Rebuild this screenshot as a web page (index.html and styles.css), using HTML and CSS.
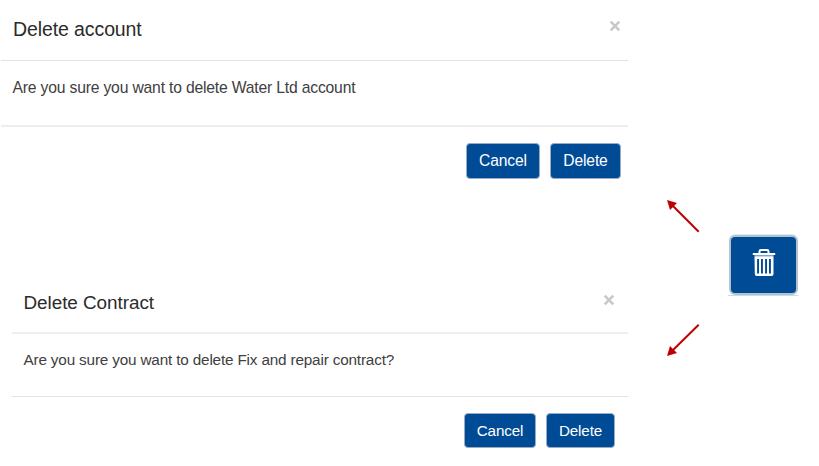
FILE: index.html
```html
<!DOCTYPE html>
<html lang="en">
<head>
<meta charset="utf-8">
<title>Delete confirmation</title>
<link rel="stylesheet" href="styles.css">
</head>
<body>
<main class="board">
  <div class="dialogs">
    <section class="dialog account">
      <header class="head">
        <h2 class="title">Delete account</h2>
        <button class="close" aria-label="Close"><svg width="12" height="12" viewBox="0 0 12 12"><path d="M1.7 1.7 10.3 10.3M10.3 1.7 1.7 10.3"/></svg></button>
      </header>
      <p class="message">Are you sure you want to delete Water Ltd account</p>
      <footer class="actions">
        <button class="btn cancel">Cancel</button>
        <button class="btn delete">Delete</button>
      </footer>
    </section>
    <section class="dialog contract">
      <header class="head">
        <h2 class="title">Delete Contract</h2>
        <button class="close" aria-label="Close"><svg width="12" height="12" viewBox="0 0 12 12"><path d="M1.7 1.7 10.3 10.3M10.3 1.7 1.7 10.3"/></svg></button>
      </header>
      <p class="message">Are you sure you want to delete Fix and repair contract?</p>
      <footer class="actions">
        <button class="btn cancel">Cancel</button>
        <button class="btn delete">Delete</button>
      </footer>
    </section>
  </div>
  <div class="arrows">
    <svg class="arrow" width="34" height="34" viewBox="0 0 34 34"><path class="shaft" d="M5 5 32.7 32.7"/><path class="tip" d="M1 1 11 4 4 11Z"/></svg>
    <svg class="arrow" width="34" height="34" viewBox="0 0 34 34"><path class="shaft" d="M5 29 32.700 1.700"/><path class="tip" d="M1 33 4 23 11 30Z"/></svg>
  </div>
  <div class="trigger">
    <button class="trash" aria-label="Delete">
      <svg width="24" height="30" viewBox="0 0 24 30">
        <path class="line" d="M7.5 5V3.4Q7.5 2 9 2H15Q16.5 2 16.5 3.4V5"/>
        <path class="lid" d="M.8 5H23.2V7H.8Z"/>
        <path class="rim" d="M2.5 7H21.5V8.300H2.500Z"/>
        <path class="can" fill-rule="evenodd" d="M2.500 8.300H21.500V26Q21.500 28 19.500 28H4.700Q2.800 28 2.800 26ZM5.100 11V25.500H7V11ZM9 11V25.500H10.900V11ZM13.100 11V25.500H15V11ZM17 11V25.500H18.900V11Z"/>
      </svg>
    </button>
  </div>
</main>
</body>
</html>
```
FILE: styles.css
```css
* { box-sizing: border-box; }
body {
  margin: 0;
  background: #fff;
  color: #333;
  font-family: "Liberation Sans", Arial, sans-serif;
}
.board {
  display: flex;
  align-items: flex-start;
  width: 819px;
  height: 466px;
  overflow: hidden;
}
.dialogs { width: 628px; }
.dialog { display: flex; flex-direction: column; }
.account { height: 274px; padding-left: 1px; }
.contract { padding-left: 12px; }
.head {
  display: flex;
  justify-content: space-between;
  align-items: flex-start;
  height: 61px;
  padding: 17px 7px 0 12px;
  border-bottom: 1px solid #e2e2e2;
}
.contract .head {
  height: 60px;
  padding: 17px 13px 0 11.500px;
  border-bottom: 2px solid #eee;
}
.title {
  margin: 0;
  font-size: 19.5px;
  letter-spacing: -0.1px;
  line-height: 24px;
  font-weight: 400;
  color: #2b2b2b;
}
.contract .title { font-size: 18.9px; letter-spacing: -0.050px; }
.close {
  display: flex;
  margin: 3px 0 0;
  padding: 0;
  border: 0;
  background: none;
}
.close path { fill: none; stroke: #c9c9c9; stroke-width: 2.6; }
.message {
  height: 66px;
  margin: 0;
  padding: 17px 12px 0 11.5px;
  border-bottom: 2px solid #eee;
  font-size: 15.700px;
  letter-spacing: -0.180px;
  line-height: 20px;
  color: #404040;
}
.contract .message {
  height: 63px;
  padding-top: 16px;
  border-bottom: 1px solid #e4e4e4;
  font-size: 15.300px;
  letter-spacing: -0.170px;
}
.actions {
  display: flex;
  justify-content: flex-end;
  gap: 10px;
  padding: 16px 7px 0 0;
}
.contract .actions { padding: 16px 13px 0 0; }
.btn {
  width: 75px;
  height: 36px;
  padding: 0;
  border: 1px solid #9aabc2;
  border-radius: 4px;
  background: #004b96;
  color: #fff;
  font: 15.600px/20px "Liberation Sans", Arial, sans-serif;
  letter-spacing: -0.120px;
}
.account .cancel { width: 74px; }
.account .delete { width: 71px; }
.contract .btn { height: 35px; font-size: 15.200px; }
.contract .cancel { width: 72px; }
.contract .delete { width: 69px; }
.arrows {
  display: flex;
  flex-direction: column;
  gap: 90px;
  margin: 199px 0 0 38px;
}
.arrow { display: block; }
.shaft { fill: none; stroke: #c00000; stroke-width: 2; }
.tip { fill: #c00000; }
.trigger {
  width: 70px;
  height: 62px;
  margin: 234px 0 0 28px;
  padding: 1px 0 0 1px;
  border-bottom: 1px solid #c0e1ec;
}
.trash {
  display: flex;
  justify-content: center;
  width: 69px;
  height: 60px;
  padding: 11px 0 0;
  border: 2px solid #b7c1cb;
  border-radius: 6px;
  background: #004b96;
  box-shadow: 0 -1px 0 #d5edf3;
}
.line { fill: none; stroke: #fff; stroke-width: 2; }
.lid, .can { fill: #fff; }
.rim { fill: #7fa5cb; }
```
